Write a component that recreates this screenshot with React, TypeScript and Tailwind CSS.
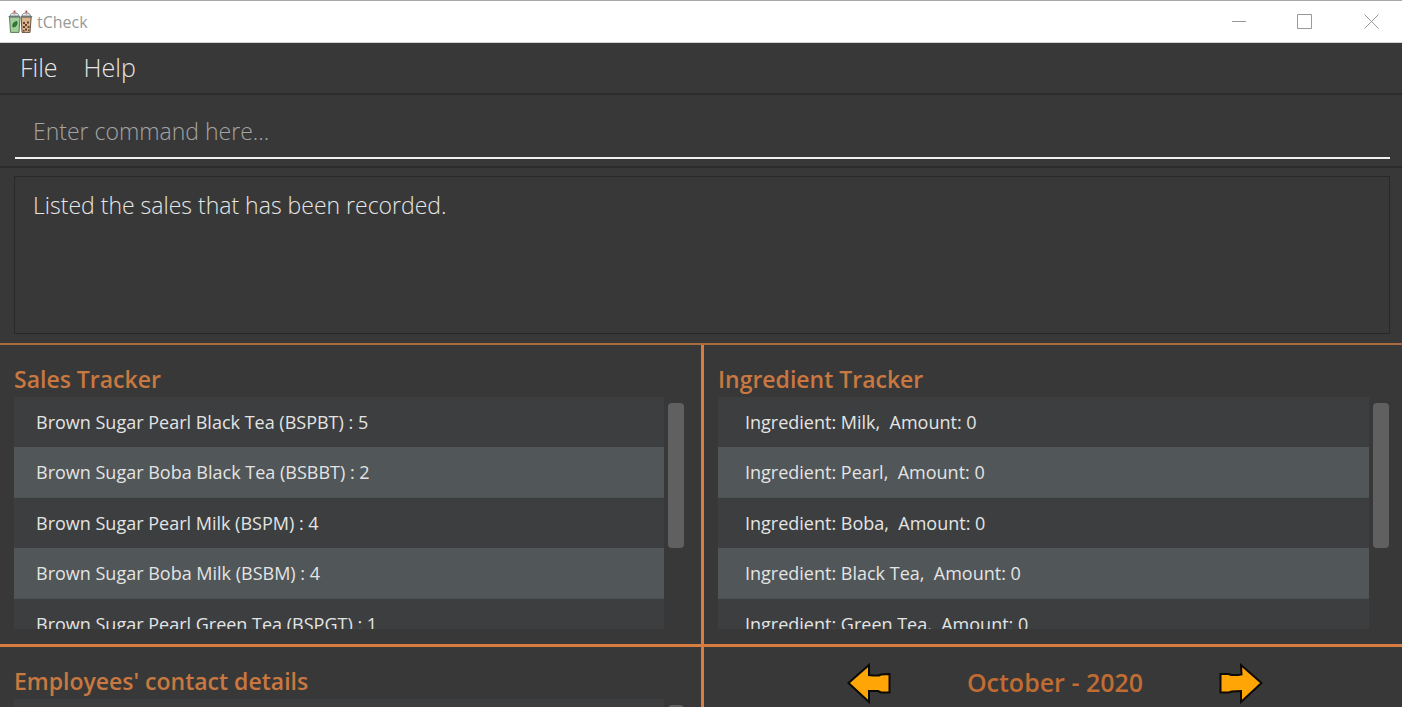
import type { ReactNode } from "react";

const sales = [
  "Brown Sugar Pearl Black Tea (BSPBT) : 5",
  "Brown Sugar Boba Black Tea (BSBBT) : 2",
  "Brown Sugar Pearl Milk (BSPM) : 4",
  "Brown Sugar Boba Milk (BSBM) : 4",
  "Brown Sugar Pearl Green Tea (BSPGT) : 1",
];

const ingredients = [
  { name: "Milk", amount: 0 },
  { name: "Pearl", amount: 0 },
  { name: "Boba", amount: 0 },
  { name: "Black Tea", amount: 0 },
  { name: "Green Tea", amount: 0 },
];

function CupsIcon() {
  return (
    <svg width="25" height="25" viewBox="0 0 25 25" fill="none" aria-hidden="true">
      <path d="M6.500 6V1.500" stroke="#c4524a" strokeWidth="1.8" />
      <path d="M18.300 6V1.500" stroke="#c4524a" strokeWidth="1.8" />
      <path d="M2 7C2.500 2.800 10.400 2.800 11 7Z" fill="#dfe6ea" fillOpacity=".7" stroke="#7d898e" strokeWidth="1" />
      <path d="M13.900 7C14.400 2.800 22 2.800 22.600 7Z" fill="#dfe6ea" fillOpacity=".7" stroke="#7d898e" strokeWidth="1" />
      <path d="M1.500 8 2.500 23.400H11L12 8Z" fill="#a0cf98" stroke="#5f7a5c" strokeWidth="1" />
      <path d="M13.200 8 14 23.400H22L23.200 8Z" fill="#dbb48c" stroke="#6b5240" strokeWidth="1" />
      <path d="M.6 7.600H12.200M12.800 7.600H24.200" stroke="#6c777b" strokeWidth="1.400" />
      <path d="M5 18C4.200 14.500 6 13 9 12.600 9.400 16 8 18 5 18Z" fill="#2f7d32" stroke="#2b5a2d" strokeWidth=".8" />
      <path d="M15 13h2v2h-2zM19 12.500h2v2h-2zM17 15h2v2h-2zM15 17h2v2h-2zM19.500 17h2v2h-2zM17 19.500h2v2h-2zM15 21h1.500v1.500h-1.500zM20 20.500h1.500v1.500h-1.500z" fill="#5d4232" />
    </svg>
  );
}

function ArrowIcon({ flipped = false }: { flipped?: boolean }) {
  return (
    <svg width="44" height="42" viewBox="0 0 44 42" aria-hidden="true">
      <path
        d={
          flipped
            ? "M1.500 12H10L12 13H19L22.500 12.500 22 3 42.500 21 22 40V29L12.500 29.500 10 30.500H1.500Z"
            : "M42.500 12 34 12.500 32 13.500H26L22 13V3L1.500 21 22 40V29H31L34 30.500H42.500Z"
        }
        fill="#ffa506"
        stroke="#0c0a06"
        strokeWidth="2"
      />
    </svg>
  );
}

function Panel({ title, className, children }: { title: string; className: string; children: ReactNode }) {
  return (
    <section className={`flex min-h-0 flex-col pl-3.5 pt-4 ${className}`}>
      <h2 className="h-9 shrink-0 text-[23px] leading-9 font-semibold text-[#c87840]">{title}</h2>
      <div className="flex min-h-0 flex-1 gap-1">{children}</div>
    </section>
  );
}

function Rows({ items, className }: { items: string[]; className: string }) {
  return (
    <ul className="min-w-0 flex-1 overflow-hidden bg-[#3c3e3f] text-[18px] text-[#e4e4e4]">
      {items.map((item) => (
        <li
          key={item}
          className={`flex h-[50px] items-center whitespace-pre even:h-[51px] even:border-b even:border-[#49534f] even:bg-[#515658] ${className}`}
        >
          {item}
        </li>
      ))}
    </ul>
  );
}

function ScrollThumb() {
  return <div className="mt-1.5 h-[145px] w-4 rounded bg-[#606060]" />;
}

export default function App() {
  return (
    <div className="overflow-hidden bg-[#383838] font-['Open_Sans','Noto_Sans',sans-serif]">
      <header className="flex h-[43px] items-center border-t border-b border-t-[#aaaaaa] border-b-[#d0d4d2] bg-white pl-2 text-[#999999]">
        <CupsIcon />
        <h1 className="ml-1 flex-1 text-base">tCheck</h1>
        <div className="-mr-0.5 flex h-full">
          <button type="button" aria-label="Minimize" className="flex w-[66px] items-center justify-center">
            <svg width="16" height="16" viewBox="0 0 16 16" stroke="currentColor"><path d="M1 7.500H15" /></svg>
          </button>
          <button type="button" aria-label="Maximize" className="flex w-[66px] items-center justify-center">
            <svg width="16" height="16" viewBox="0 0 16 16" fill="none" stroke="currentColor"><path d="M.5 .5H14.500V14.500H.5Z" /></svg>
          </button>
          <button type="button" aria-label="Close" className="flex w-[66px] items-center justify-center">
            <svg width="16" height="16" viewBox="0 0 16 16" stroke="currentColor"><path d="M1.500 .5 15.500 14.500M15.500 .5 1.500 14.500" /></svg>
          </button>
        </div>
      </header>

      <nav className="flex h-[52px] items-center gap-[26px] border-b-2 border-[#2c2c2c] pl-5 text-[25px] font-light text-[#e6e6e6]">
        <button type="button">File</button>
        <button type="button">Help</button>
      </nav>

      <div className="h-[73px] border-b-2 border-[#2c2c2c] pt-2.5 pr-3 pl-[15px]">
        <input
          type="text"
          aria-label="Command"
          placeholder="Enter command here..."
          className="h-[54px] w-full border-b-2 border-[#f0f0f0] bg-transparent pl-[18px] text-[23px] font-light text-[#e6e6e6] outline-none placeholder:text-[#a4a4a4]"
        />
      </div>

      <div className="pt-2 pr-3 pb-[9px] pl-3.5">
        <output className="block h-[158px] border border-[#282828] px-[18px] pt-2.5 text-[23px] leading-9 font-light text-[#e6e6e6]">
          Listed the sales that has been recorded.
        </output>
      </div>

      <main className="border-t-2 border-[#a96a3f]">
        <div className="grid h-[302px] grid-cols-[calc(50%+3px)_minmax(0,1fr)] grid-rows-[minmax(0,1fr)] border-b-3 border-[#d87d3f]">
          <Panel title="Sales Tracker" className="border-r-3 border-[#d87d3f] pr-[17px] pb-[15px]">
            <Rows items={sales} className="pl-[22px]" />
            <ScrollThumb />
          </Panel>
          <Panel title="Ingredient Tracker" className="pr-[13px] pb-[15px]">
            <Rows items={ingredients.map((i) => `Ingredient: ${i.name},  Amount: ${i.amount}`)} className="pl-[27px]" />
            <ScrollThumb />
          </Panel>
        </div>
        <div className="grid h-[60px] grid-cols-[calc(50%+3px)_minmax(0,1fr)] grid-rows-[minmax(0,1fr)] overflow-hidden">
          <Panel title="Employees' contact details" className="border-r-3 border-[#d87d3f] pr-[17px]">
            <Rows items={[]} className="pl-[22px]" />
            <ScrollThumb />
          </Panel>
          <section className="flex items-center justify-center gap-[76px] pt-3 pl-1">
            <button type="button" aria-label="Previous month"><ArrowIcon /></button>
            <h2 className="text-[25px] font-semibold text-[#c06c33]">October - 2020</h2>
            <button type="button" aria-label="Next month"><ArrowIcon flipped /></button>
          </section>
        </div>
      </main>
    </div>
  );
}
